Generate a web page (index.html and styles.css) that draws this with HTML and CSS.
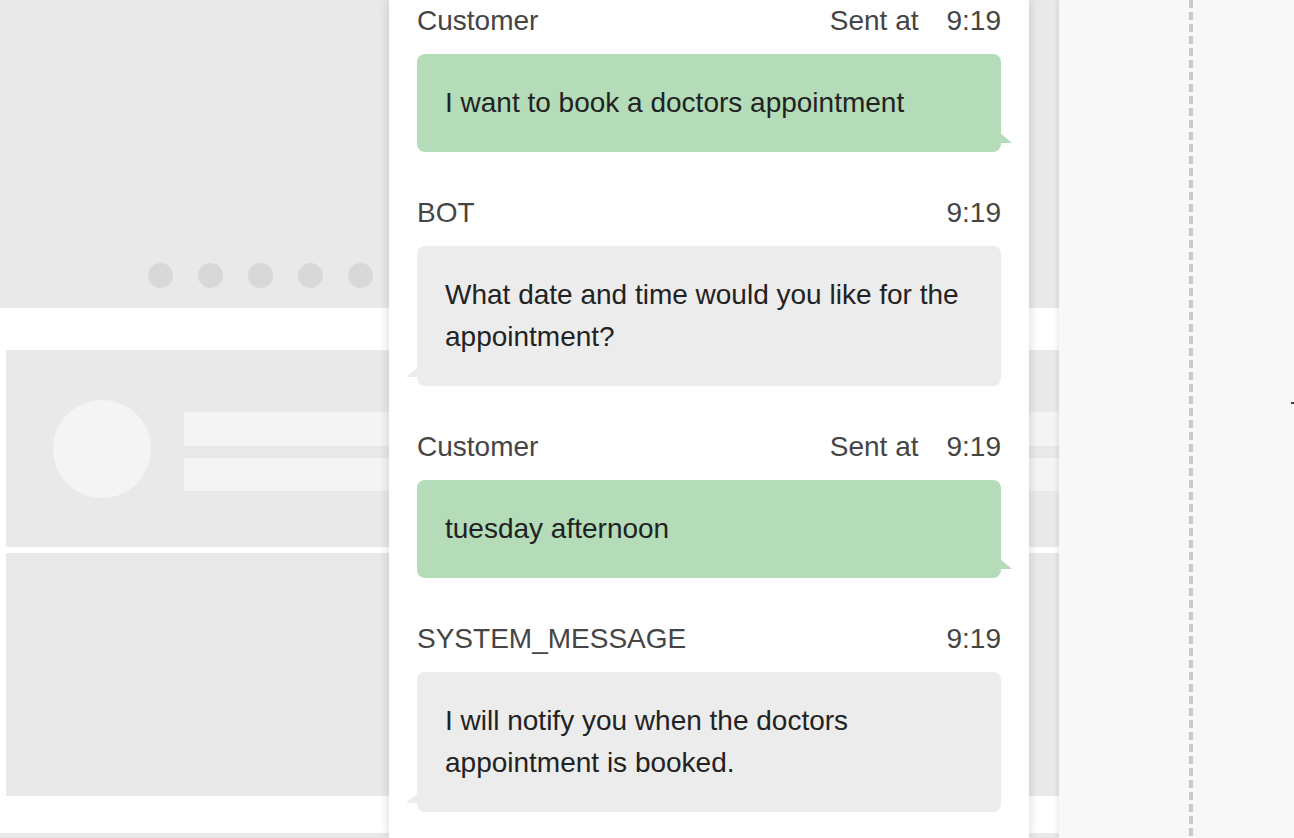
FILE: index.html
```html
<!DOCTYPE html>
<html lang="en">
<head>
<meta charset="utf-8">
<title>Chat transcript</title>
<link rel="stylesheet" href="styles.css">
</head>
<body>
<div class="app">
  <div class="stage">
    <div class="mock">
      <div class="mock-top">
        <div class="dots"><span class="dot"></span><span class="dot"></span><span class="dot"></span><span class="dot"></span><span class="dot"></span></div>
      </div>
      <div class="mock-card">
        <div class="avatar"></div>
        <div class="lines"><div class="line"></div><div class="line line-2"></div></div>
      </div>
      <div class="mock-block"></div>
      <div class="mock-foot"></div>
    </div>

    <aside class="chat">
      <div class="msg msg-customer">
        <div class="meta"><span class="who">Customer</span><span class="when"><span class="sent">Sent at</span>9:19</span></div>
        <div class="bubble bubble-out">I want to book a doctors appointment</div>
      </div>
      <div class="msg msg-bot">
        <div class="meta"><span class="who">BOT</span><span class="when">9:19</span></div>
        <div class="bubble bubble-in">What date and time would you like for the appointment?</div>
      </div>
      <div class="msg msg-customer">
        <div class="meta"><span class="who">Customer</span><span class="when"><span class="sent">Sent at</span>9:19</span></div>
        <div class="bubble bubble-out">tuesday afternoon</div>
      </div>
      <div class="msg msg-system">
        <div class="meta"><span class="who">SYSTEM_MESSAGE</span><span class="when">9:19</span></div>
        <div class="bubble bubble-in">I will notify you when the doctors appointment is booked.</div>
      </div>
    </aside>
  </div>

  <div class="side">
    <div class="dash"></div>
    <span class="mark"></span>
  </div>
</div>
</body>
</html>
```

FILE: styles.css
```css
* { box-sizing: border-box; }

html, body {
  margin: 0;
  padding: 0;
  height: 100%;
  overflow: hidden;
}

body {
  font-family: "Liberation Sans", Arial, Helvetica, sans-serif;
  background: #ffffff;
}

.app {
  display: flex;
  height: 838px;
}

/* ---------- left stage with wireframe mock ---------- */
.stage {
  position: relative;
  width: 1059px;
  flex: 0 0 1059px;
  height: 100%;
}

.mock {
  display: flex;
  flex-direction: column;
  height: 100%;
  background: #ffffff;
}

.mock-top {
  height: 308px;
  background: #e9e9e9;
  padding: 263px 0 0 148px;
}

.dots {
  display: flex;
  gap: 25px;
}

.dot {
  width: 25px;
  height: 25px;
  border-radius: 50%;
  background: #d8d8d8;
}

.mock-card {
  margin: 42px 0 0 6px;
  height: 197px;
  background: #e9e9e9;
  display: flex;
  align-items: flex-start;
  padding-left: 47px;
}

.avatar {
  width: 98px;
  height: 98px;
  border-radius: 50%;
  background: #f4f4f4;
  margin-top: 50px;
}

.lines {
  flex: 1;
  margin: 62px 0 0 33px;
  display: flex;
  flex-direction: column;
  gap: 12px;
}

.line {
  height: 34px;
  background: #f4f4f4;
}

.line-2 { height: 33px; }

.mock-block {
  margin: 6px 0 0 6px;
  height: 243px;
  background: #e9e9e9;
}

.mock-foot {
  margin-top: 37px;
  flex: 1;
  background: #e8e8e8;
}

/* ---------- chat panel ---------- */
.chat {
  position: absolute;
  top: 0;
  left: 389px;
  width: 640px;
  height: 100%;
  background: #ffffff;
  box-shadow: 0 0 10px rgba(0, 0, 0, 0.16);
  padding: 0 28px;
  overflow: hidden;
}

.msg + .msg { margin-top: 40px; }

.meta {
  display: flex;
  justify-content: space-between;
  font-size: 28px;
  line-height: 42px;
  color: #454545;
}

.sent { margin-right: 28px; }

.bubble {
  position: relative;
  margin-top: 12px;
  padding: 28px;
  border-radius: 8px;
  font-size: 28px;
  line-height: 42px;
  color: #222222;
}

.bubble-out { background: #b4dcb8; }
.bubble-in { background: #ececec; }

.bubble-out::after {
  content: "";
  position: absolute;
  left: calc(100% - 1px);
  bottom: 9px;
  width: 12px;
  height: 10px;
  background: #b4dcb8;
  clip-path: polygon(0 0, 100% 100%, 0 100%);
}

.bubble-in::after {
  content: "";
  position: absolute;
  right: calc(100% - 1px);
  bottom: 9px;
  width: 12px;
  height: 10px;
  background: #ececec;
  clip-path: polygon(100% 0, 100% 100%, 0 100%);
}

/* ---------- right side pane ---------- */
.side {
  position: relative;
  flex: 1;
  height: 100%;
  background: #f8f8f8;
  box-shadow: -2px 0 4px rgba(0, 0, 0, 0.08);
  z-index: 1;
}

.dash {
  margin-left: 130px;
  width: 4px;
  height: 100%;
  background: repeating-linear-gradient(to bottom, #cbcbcb 0, #cbcbcb 8px, transparent 8px, transparent 12px);
}

.mark {
  position: absolute;
  top: 402px;
  right: 0;
  width: 3px;
  height: 2px;
  background: #444444;
}
```
